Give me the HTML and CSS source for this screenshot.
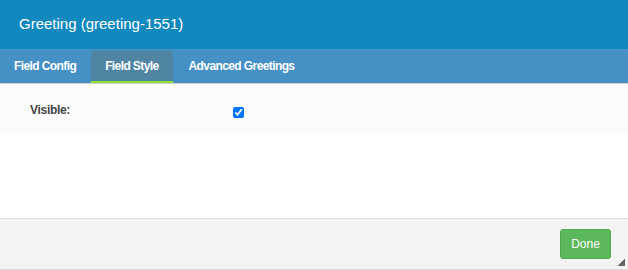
FILE: index.html
```html
<!DOCTYPE html>
<html lang="en">
<head>
    <meta charset="UTF-8">
    <meta name="viewport" content="width=device-width, initial-scale=1.0">
    <title>Greeting</title>
    <link rel="stylesheet" href="styles.css">
</head>
<body>

    <div class="dialog">
        <div class="dialog-header">Greeting (greeting-1551)</div>

        <div class="tabs">
            <div class="tab">Field Config</div>
            <div class="tab active">Field Style</div>
            <div class="tab">Advanced Greetings</div>
        </div>

        <div class="dialog-body">
            <div class="form-row">
                <label for="visible">Visible:</label>
                <input type="checkbox" id="visible" checked>
            </div>
        </div>

        <div class="dialog-footer">
            <button class="done-btn">Done</button>
            <span class="resize-handle"></span>
        </div>
    </div>

</body>
</html>
```

FILE: styles.css
```css
/* General Styles */
body {
    font-family: "Liberation Sans", Arial, sans-serif;
    margin: 0;
    background: #fff;
}

.dialog {
    height: 270px;
    display: flex;
    flex-direction: column;
    position: relative;
}

.dialog-header {
    height: 49px;
    background-color: #1189be;
    color: #fff;
    font-size: 15px;
    padding-left: 19px;
    display: flex;
    align-items: center;
    padding-bottom: 2px;
    box-sizing: border-box;
}

/* Tabs */
.tabs {
    height: 35px;
    background-color: #4590c4;
    border-bottom: 1px solid #d0d0d0;
    display: flex;
    gap: 1px;
    box-sizing: border-box;
    padding-top: 2px;
}

.tab {
    padding: 0 14px;
    color: #fff;
    font-size: 12px;
    letter-spacing: -0.6px;
    font-weight: bold;
    display: flex;
    align-items: center;
    border-bottom: 2px solid transparent;
    border-radius: 4px 4px 0 0;
}

.tab.active {
    background-color: #4f85a3;
    border-bottom-color: #8ee03c;
    margin-right: 1px;
}

/* Body */
.dialog-body {
    flex: 1;
}

.form-row {
    height: 50px;
    background-color: #fcfcfc;
    display: grid;
    grid-template-columns: 203px auto;
    align-items: center;
    padding-left: 30px;
}

.form-row label {
    font-size: 12px;
    letter-spacing: -0.3px;
    font-weight: bold;
    color: #444;
    margin-top: 2px;
}

.form-row input {
    margin: 7px 0 0 0;
    width: 11px;
    height: 11px;
    justify-self: start;
}

/* Footer */
.dialog-footer {
    height: 52px;
    box-sizing: border-box;
    border-top: 1px solid #dcdcdc;
    border-bottom: 1px solid #d6d6d6;
    background-color: #f4f4f4;
    display: flex;
    justify-content: flex-end;
    align-items: center;
    padding-right: 17px;
}

.done-btn {
    width: 51px;
    height: 30px;
    background-color: #5cb85c;
    border: 1px solid #4cae4c;
    border-radius: 3px;
    color: #fff;
    font-family: inherit;
    font-size: 12px;
    cursor: pointer;
    margin-top: -1px;
}

.resize-handle {
    position: absolute;
    right: 3px;
    bottom: 4px;
    width: 7px;
    height: 7px;
    background: linear-gradient(135deg, transparent 50%, #666 50%);
}
```
